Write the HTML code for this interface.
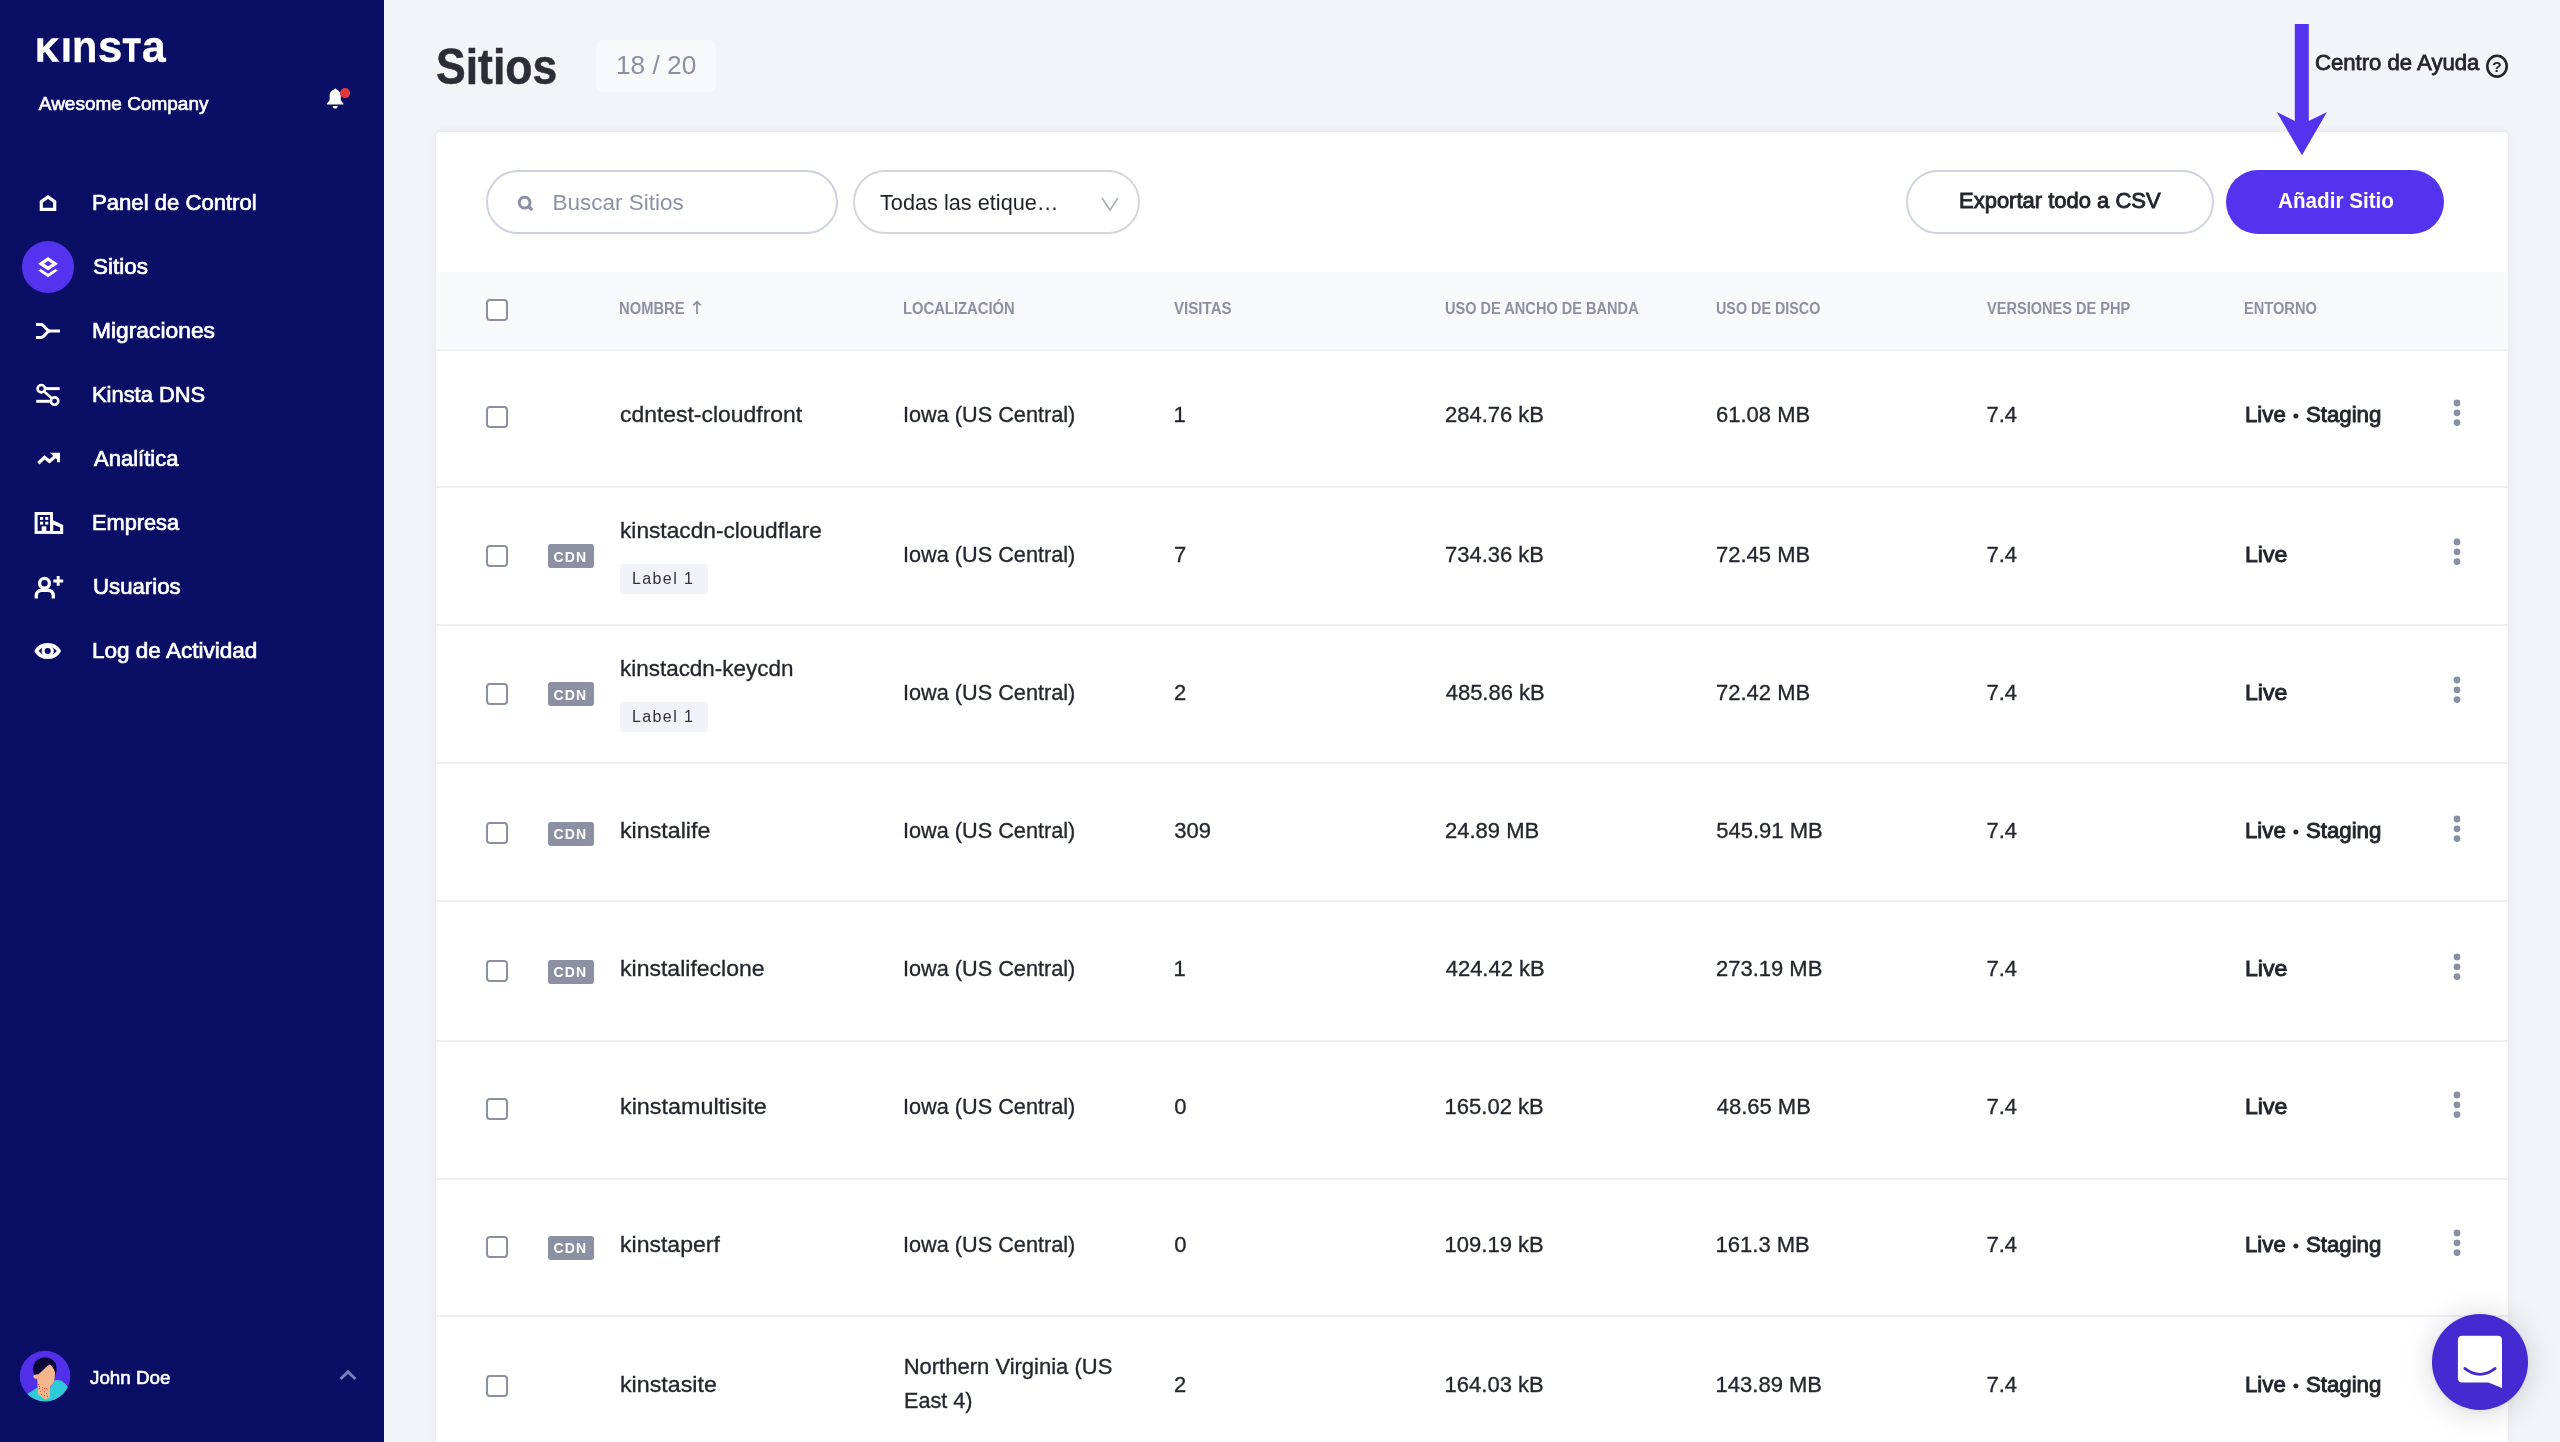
<!DOCTYPE html>
<html lang="es"><head><meta charset="utf-8"><title>Sitios - MyKinsta</title>
<style>
html,body{margin:0;padding:0}
body{width:2560px;height:1442px;overflow:hidden;position:relative;background:#f3f4f8;font-family:"Liberation Sans", sans-serif}
.t{position:absolute;white-space:nowrap}
svg{display:block;overflow:visible}
</style></head><body>
<div id="app" style="position:absolute;left:0;top:0;width:2560px;height:1442px;will-change:transform">
<div style="position:absolute;left:0;top:0;width:384px;height:1442px;background:#0a0e64"></div>
<svg style="position:absolute;left:324px;top:86px" width="28" height="26" viewBox="0 0 28 26">
<path d="M11.2 2.2 L9.6 3.8 C6.8 5 5.6 7.4 5.6 10.2 L5.6 14.2 L3 17.4 L3 18.6 L19.4 18.6 L19.4 17.4 L16.8 14.2 L16.8 10.2 C16.8 7.4 15.6 5 12.8 3.8 Z" fill="#fff"/>
<path d="M8.6 20 L13.8 20 C13.8 21.5 12.6 22.6 11.2 22.6 C9.8 22.6 8.6 21.5 8.6 20 Z" fill="#fff"/>
<circle cx="21.1" cy="7.1" r="5" fill="#df383c"/>
</svg>
<div style="position:absolute;left:22px;top:241.3px;width:52px;height:51.4px;border-radius:50%;background:#5333ed"></div>
<svg style="position:absolute;left:0;top:0" width="384" height="720" viewBox="0 0 384 720" fill="none" stroke="#fff" stroke-width="3">
<!-- home -->
<path d="M41.3 209.4 L41.3 201.6 L48 197 L54.7 201.6 L54.7 209.4 Z" stroke-width="3.2" stroke-linejoin="miter"/>
<!-- layers -->
<path d="M38.2 263.8 L48.05 257.1 L57.9 263.8 L48.05 270.5 Z M43.9 263.7 L48.05 266.3 L52.2 263.7 L48.05 261.1 Z" fill="#fff" stroke="none" fill-rule="evenodd"/>
<path d="M38.2 270.6 L40.7 268.9 L48.05 273.8 L55.4 268.9 L57.9 270.6 L48.05 277.2 Z" fill="#fff" stroke="none"/>
<!-- migrations -->
<path d="M36 324.5 L41 324.5 C45 324.5 46 331 50 331 L60 331" stroke-width="2.9"/><path d="M36 337.5 L41 337.5 C45 337.5 46 331 50 331" stroke-width="2.9"/>
<!-- dns -->
<circle cx="41.3" cy="388.7" r="3.7" stroke-width="2.6"/><circle cx="54.6" cy="401.1" r="3.7" stroke-width="2.6"/>
<path d="M43.9 391.3 L52 398.5" stroke-width="2.6"/><path d="M46 388.6 L59.7 388.6"/><path d="M36.2 401.3 L50 401.3"/>
<!-- analytics (trending up) -->
<path d="M38.3 463.3 L44.5 457.4 L49.5 461.4 L56.5 455.2" stroke-width="3.3"/><path d="M49.8 452.7 L60 452.7 L60 462.2 L57 462.2 L57 459.4 Z" fill="#fff" stroke="none"/>
<!-- building -->
<rect x="36.1" y="513.5" width="15.4" height="18.9" stroke-width="3"/>
<g fill="#fff" stroke="none"><rect x="40" y="517" width="3.1" height="2.9"/><rect x="45.2" y="517" width="3.1" height="2.9"/><rect x="40" y="521.7" width="3.1" height="2.9"/><rect x="45.2" y="521.7" width="3.1" height="2.9"/><rect x="41.7" y="526.3" width="4.6" height="6"/>
<path d="M52.5 520.1 L63.2 525 L63.2 533.9 L52.5 533.9 Z M53.3 524.5 L60.1 527.6 L60.1 531 L53.3 531 Z" fill-rule="evenodd"/></g>
<!-- users -->
<circle cx="44.5" cy="583.3" r="4.9" stroke-width="3.3"/>
<path d="M36.3 598.4 L36.3 595.6 C36.3 592.4 38.6 590.2 41.8 590.2 L47.8 590.2 C51 590.2 53.3 592.4 53.3 595.6 L53.3 598.4" stroke-width="3.4"/>
<path d="M58.2 576 L58.2 585.8 M53.3 581.1 L63.2 581.1" stroke-width="3"/>
<!-- eye -->
<path d="M36.4 651 C41 642.8 54.4 642.8 59 651 C54.4 659.2 41 659.2 36.4 651 Z" stroke-width="3.7" stroke-linejoin="round"/>
<circle cx="47.7" cy="651" r="4.6" stroke-width="3.1"/>
</svg>
<svg style="position:absolute;left:20px;top:1350px" width="51" height="53" viewBox="0 0 51 53">
<defs><clipPath id="av"><circle cx="25.1" cy="26.1" r="25.3"/></clipPath></defs>
<circle cx="25.1" cy="26.1" r="25.3" fill="#5230e9"/>
<g clip-path="url(#av)">
<path d="M4 46 L17.4 37.6 L30 38 L35 30.2 Q38 29.4 41 30.6 Q46 33.5 49 39 L52 54 L0 54 Z" fill="#2fcbd8"/>
<path d="M17.3 30 L18 44.2 L25.2 49.6 L29.8 47.4 L29.8 37.4 L34.2 31.4 L35.2 22 L32 14 L22 18 L16 25 Z" fill="#f7b78d"/>
<circle cx="15.8" cy="26.6" r="2.4" fill="#f7b78d"/>
<path d="M29.5 14 L18.3 24.6 Q16 23.6 14.6 25 Q12 20 13.6 15 Q16.5 7.6 24.4 7.2 Q33 7.2 36.2 15 Q37.4 20 35.6 25.6 Q35.4 18.6 29.5 14 Z" fill="#0b0433"/>
<g fill="#e1303c"><circle cx="18.5" cy="34.6" r=".55"/><circle cx="19.5" cy="36.6" r=".55"/><circle cx="19.5" cy="38.6" r=".55"/><circle cx="22.5" cy="37.6" r=".55"/><circle cx="24.5" cy="38.6" r=".55"/><circle cx="26.6" cy="38.6" r=".55"/><circle cx="27.5" cy="39.7" r=".55"/><circle cx="22.5" cy="39.7" r=".55"/><circle cx="20.5" cy="41.6" r=".55"/><circle cx="24.5" cy="41.6" r=".55"/><circle cx="26.5" cy="43.6" r=".55"/><circle cx="21.5" cy="44.6" r=".55"/><circle cx="24.5" cy="45.6" r=".55"/><circle cx="27.5" cy="46.6" r=".55"/></g>
</g></svg>
<svg style="position:absolute;left:338.3px;top:1368.2px" width="20" height="14" viewBox="0 0 20 14"><path d="M2.5 11 L10 3.8 L17.5 11" fill="none" stroke="#7d80b4" stroke-width="3"/></svg>
<div style="position:absolute;left:596px;top:40px;width:120px;height:52px;border-radius:7px;background:#f8f9fb"></div>
<svg style="position:absolute;left:2484px;top:53px" width="26" height="26" viewBox="0 0 26 26">
<ellipse cx="13" cy="13.2" rx="9.7" ry="10.4" fill="none" stroke="#23262f" stroke-width="2.6"/>
<text x="13" y="18.7" text-anchor="middle" font-family='"Liberation Sans", sans-serif' font-weight="700" font-size="15.5" fill="#23262f">?</text></svg>
<div style="position:absolute;left:436px;top:132px;width:2072px;height:1330px;border-radius:5px;background:#fff;box-shadow:0 0 8px rgba(30,40,90,0.075)"></div>
<div style="position:absolute;left:486.3px;top:170px;width:351.5px;height:64px;box-sizing:border-box;border:2px solid #cdd2de;border-radius:32px"></div>
<svg style="position:absolute;left:514px;top:192px" width="24" height="24" viewBox="0 0 24 24"><circle cx="10.6" cy="10.6" r="5.4" fill="none" stroke="#8a90a5" stroke-width="3"/><path d="M14.5 14.5 L18.2 18.2" stroke="#8a90a5" stroke-width="3.2"/></svg>
<div style="position:absolute;left:852.5px;top:170px;width:287px;height:64px;box-sizing:border-box;border:2px solid #d6d6da;border-radius:32px"></div>
<svg style="position:absolute;left:1099px;top:195px" width="22" height="18" viewBox="0 0 22 18"><path d="M3 3 L11 15 L19 3" fill="none" stroke="#a9aebb" stroke-width="1.6"/></svg>
<div style="position:absolute;left:1906px;top:170px;width:308px;height:64px;box-sizing:border-box;border:2px solid #d0d4e0;border-radius:32px"></div>
<div style="position:absolute;left:2226px;top:170px;width:218px;height:64px;border-radius:32px;background:#5333ed"></div>
<svg style="position:absolute;left:2270px;top:20px" width="64" height="140" viewBox="0 0 64 140">
<path d="M24.8 4 L38.8 4 L38.8 101 L57 92 L32 135.2 L6.7 92 L24.8 101 Z" fill="#5333ed"/></svg>
<div style="position:absolute;left:436px;top:272px;width:2072px;height:76px;background:#f8f9fb"></div>
<div style="position:absolute;left:436px;top:348.5px;width:2072px;height:2px;background:#eef0f6"></div>
<div style="position:absolute;left:436px;top:486px;width:2072px;height:2px;background:#eef0f6"></div>
<div style="position:absolute;left:436px;top:623.8px;width:2072px;height:2px;background:#eef0f6"></div>
<div style="position:absolute;left:436px;top:761.8px;width:2072px;height:2px;background:#eef0f6"></div>
<div style="position:absolute;left:436px;top:900.2px;width:2072px;height:2px;background:#eef0f6"></div>
<div style="position:absolute;left:436px;top:1039.5px;width:2072px;height:2px;background:#eef0f6"></div>
<div style="position:absolute;left:436px;top:1178px;width:2072px;height:2px;background:#eef0f6"></div>
<div style="position:absolute;left:436px;top:1315.4px;width:2072px;height:2px;background:#eef0f6"></div>
<div style="position:absolute;left:486px;top:299px;width:22px;height:22px;box-sizing:border-box;border:2px solid #8b90a2;border-radius:4px;background:#fff"></div>
<svg style="position:absolute;left:691px;top:300px" width="12" height="15" viewBox="0 0 12 15"><path d="M6 14 L6 2 M2.2 5.4 L6 1.6 L9.8 5.4" fill="none" stroke="#8a90a5" stroke-width="1.7"/></svg>
<div style="position:absolute;left:486px;top:406px;width:22px;height:22px;box-sizing:border-box;border:2px solid #8b90a2;border-radius:4px;background:#fff"></div>
<svg style="position:absolute;left:2451.6px;top:398.2px" width="10" height="30" viewBox="0 0 10 30" fill="#8a90a3"><circle cx="5" cy="5.0" r="3.4"/><circle cx="5" cy="14.8" r="3.4"/><circle cx="5" cy="24.6" r="3.4"/></svg>
<div style="position:absolute;left:486px;top:544.6px;width:22px;height:22px;box-sizing:border-box;border:2px solid #8b90a2;border-radius:4px;background:#fff"></div>
<div style="position:absolute;left:548px;top:544.4px;width:46px;height:24px;border-radius:3px;background:#8b90a3"></div>
<div style="position:absolute;left:620px;top:564.1px;width:88px;height:30px;border-radius:4px;background:#f1f2f8"></div>
<svg style="position:absolute;left:2451.6px;top:536.8000000000001px" width="10" height="30" viewBox="0 0 10 30" fill="#8a90a3"><circle cx="5" cy="5.0" r="3.4"/><circle cx="5" cy="14.8" r="3.4"/><circle cx="5" cy="24.6" r="3.4"/></svg>
<div style="position:absolute;left:486px;top:682.6px;width:22px;height:22px;box-sizing:border-box;border:2px solid #8b90a2;border-radius:4px;background:#fff"></div>
<div style="position:absolute;left:548px;top:682.4px;width:46px;height:24px;border-radius:3px;background:#8b90a3"></div>
<div style="position:absolute;left:620px;top:702.1px;width:88px;height:30px;border-radius:4px;background:#f1f2f8"></div>
<svg style="position:absolute;left:2451.6px;top:674.8000000000001px" width="10" height="30" viewBox="0 0 10 30" fill="#8a90a3"><circle cx="5" cy="5.0" r="3.4"/><circle cx="5" cy="14.8" r="3.4"/><circle cx="5" cy="24.6" r="3.4"/></svg>
<div style="position:absolute;left:486px;top:821.8px;width:22px;height:22px;box-sizing:border-box;border:2px solid #8b90a2;border-radius:4px;background:#fff"></div>
<div style="position:absolute;left:548px;top:821.5999999999999px;width:46px;height:24px;border-radius:3px;background:#8b90a3"></div>
<svg style="position:absolute;left:2451.6px;top:814.0px" width="10" height="30" viewBox="0 0 10 30" fill="#8a90a3"><circle cx="5" cy="5.0" r="3.4"/><circle cx="5" cy="14.8" r="3.4"/><circle cx="5" cy="24.6" r="3.4"/></svg>
<div style="position:absolute;left:486px;top:959.7px;width:22px;height:22px;box-sizing:border-box;border:2px solid #8b90a2;border-radius:4px;background:#fff"></div>
<div style="position:absolute;left:548px;top:959.5px;width:46px;height:24px;border-radius:3px;background:#8b90a3"></div>
<svg style="position:absolute;left:2451.6px;top:951.9000000000001px" width="10" height="30" viewBox="0 0 10 30" fill="#8a90a3"><circle cx="5" cy="5.0" r="3.4"/><circle cx="5" cy="14.8" r="3.4"/><circle cx="5" cy="24.6" r="3.4"/></svg>
<div style="position:absolute;left:486px;top:1098px;width:22px;height:22px;box-sizing:border-box;border:2px solid #8b90a2;border-radius:4px;background:#fff"></div>
<svg style="position:absolute;left:2451.6px;top:1090.2px" width="10" height="30" viewBox="0 0 10 30" fill="#8a90a3"><circle cx="5" cy="5.0" r="3.4"/><circle cx="5" cy="14.8" r="3.4"/><circle cx="5" cy="24.6" r="3.4"/></svg>
<div style="position:absolute;left:486px;top:1236px;width:22px;height:22px;box-sizing:border-box;border:2px solid #8b90a2;border-radius:4px;background:#fff"></div>
<div style="position:absolute;left:548px;top:1235.8px;width:46px;height:24px;border-radius:3px;background:#8b90a3"></div>
<svg style="position:absolute;left:2451.6px;top:1228.2px" width="10" height="30" viewBox="0 0 10 30" fill="#8a90a3"><circle cx="5" cy="5.0" r="3.4"/><circle cx="5" cy="14.8" r="3.4"/><circle cx="5" cy="24.6" r="3.4"/></svg>
<div style="position:absolute;left:486px;top:1375px;width:22px;height:22px;box-sizing:border-box;border:2px solid #8b90a2;border-radius:4px;background:#fff"></div>
<svg style="position:absolute;left:2451.6px;top:1367.2px" width="10" height="30" viewBox="0 0 10 30" fill="#8a90a3"><circle cx="5" cy="5.0" r="3.4"/><circle cx="5" cy="14.8" r="3.4"/><circle cx="5" cy="24.6" r="3.4"/></svg>
<div style="position:absolute;left:2432.2px;top:1314.2px;width:95.7px;height:95.7px;border-radius:50%;background:#4529d1;box-shadow:0 1px 6px 0 rgba(0,0,0,.06),0 2px 32px 0 rgba(0,0,0,.16)"></div>
<svg style="position:absolute;left:2452px;top:1330px" width="56" height="64" viewBox="0 0 56 64">
<path d="M10.4 5.8 L45.6 5.8 Q50 5.8 50 10.2 L50 57.9 L36.4 52.5 L10.4 52.5 Q5.9 52.5 5.9 48 L5.9 10.2 Q5.9 5.8 10.4 5.8 Z" fill="#fff"/>
<path d="M12.8 38.4 Q27.9 50.2 43.2 38.4" fill="none" stroke="#4529d1" stroke-width="2.7" stroke-linecap="round"/></svg>
<div id="logo0" class="t" style="left:36.47px;top:35.00px;font-size:31.8px;line-height:31.8px;color:#fff;font-weight:700;transform:scaleX(0.9727);transform-origin:0 50%;-webkit-text-stroke:1.4px #fff;">K</div>
<div id="logo1" class="t" style="left:62.30px;top:35.00px;font-size:31.8px;line-height:31.8px;color:#fff;font-weight:700;transform:scaleX(1.0063);transform-origin:0 50%;-webkit-text-stroke:1.4px #fff;">I</div>
<div id="logo2" class="t" style="left:72.20px;top:24.00px;font-size:45.2px;line-height:45.2px;color:#fff;font-weight:700;transform:scaleX(0.9204);transform-origin:0 50%;-webkit-text-stroke:0.4px #fff;">n</div>
<div id="logo3" class="t" style="left:97.73px;top:25.00px;font-size:44.6px;line-height:44.6px;color:#fff;font-weight:700;transform:scaleX(0.9813);transform-origin:0 50%;-webkit-text-stroke:0.4px #fff;">s</div>
<div id="logo4" class="t" style="left:123.10px;top:35.00px;font-size:31.8px;line-height:31.8px;color:#fff;font-weight:700;transform:scaleX(0.8928);transform-origin:0 50%;-webkit-text-stroke:1.4px #fff;">T</div>
<div id="logo5" class="t" style="left:141.93px;top:24.00px;font-size:45.2px;line-height:45.2px;color:#fff;font-weight:700;transform:scaleX(0.9426);transform-origin:0 50%;-webkit-text-stroke:0.4px #fff;">a</div>
<div id="company" class="t" style="left:38.80px;top:94.00px;font-size:19.0px;line-height:19.0px;color:#fff;font-weight:400;-webkit-text-stroke:0.6px #fff;">Awesome Company</div>
<div id="nav0" class="t" style="left:92.27px;top:192.00px;font-size:22px;line-height:22px;color:#fff;font-weight:400;transform:scaleX(1.0049);transform-origin:0 50%;-webkit-text-stroke:0.7px #fff;">Panel de Control</div>
<div id="nav1" class="t" style="left:93.30px;top:256.00px;font-size:22px;line-height:22px;color:#fff;font-weight:400;transform:scaleX(1.0206);transform-origin:0 50%;-webkit-text-stroke:0.7px #fff;">Sitios</div>
<div id="nav2" class="t" style="left:92.22px;top:320.00px;font-size:22px;line-height:22px;color:#fff;font-weight:400;transform:scaleX(1.0370);transform-origin:0 50%;-webkit-text-stroke:0.7px #fff;">Migraciones</div>
<div id="nav3" class="t" style="left:92.29px;top:384.00px;font-size:22px;line-height:22px;color:#fff;font-weight:400;transform:scaleX(0.9949);transform-origin:0 50%;-webkit-text-stroke:0.7px #fff;">Kinsta DNS</div>
<div id="nav4" class="t" style="left:94.00px;top:448.00px;font-size:22px;line-height:22px;color:#fff;font-weight:400;-webkit-text-stroke:0.7px #fff;">Analítica</div>
<div id="nav5" class="t" style="left:92.30px;top:512.00px;font-size:22px;line-height:22px;color:#fff;font-weight:400;transform:scaleX(0.9890);transform-origin:0 50%;-webkit-text-stroke:0.7px #fff;">Empresa</div>
<div id="nav6" class="t" style="left:92.61px;top:576.00px;font-size:22px;line-height:22px;color:#fff;font-weight:400;transform:scaleX(1.0089);transform-origin:0 50%;-webkit-text-stroke:0.7px #fff;">Usuarios</div>
<div id="nav7" class="t" style="left:92.24px;top:640.00px;font-size:22px;line-height:22px;color:#fff;font-weight:400;transform:scaleX(1.0237);transform-origin:0 50%;-webkit-text-stroke:0.7px #fff;">Log de Actividad</div>
<div id="john" class="t" style="left:90.11px;top:1368.00px;font-size:19.0px;line-height:19.0px;color:#fff;font-weight:400;transform:scaleX(0.9904);transform-origin:0 50%;-webkit-text-stroke:0.6px #fff;">John Doe</div>
<div id="h1" class="t" style="left:436.20px;top:42.00px;font-size:50.5px;line-height:50.5px;color:#2b2e36;font-weight:700;transform:scaleX(0.8822);transform-origin:0 50%;-webkit-text-stroke:0.5px #2b2e36;">Sitios</div>
<div id="count" class="t" style="left:616.06px;top:53.00px;font-size:25.7px;line-height:25.7px;color:#8b91a3;font-weight:400;transform:scaleX(1.0217);transform-origin:0 50%;">18 / 20</div>
<div id="help" class="t" style="left:2315.36px;top:52.00px;font-size:22.0px;line-height:22.0px;color:#23262f;font-weight:400;transform:scaleX(1.0054);transform-origin:0 50%;-webkit-text-stroke:0.8px #23262f;">Centro de Ayuda</div>
<div id="search" class="t" style="left:552.44px;top:192.00px;font-size:22.5px;line-height:22.5px;color:#8b93a7;font-weight:400;">Buscar Sitios</div>
<div id="select" class="t" style="left:879.56px;top:192.00px;font-size:22.5px;line-height:22.5px;color:#1f222b;font-weight:400;transform:scaleX(0.9646);transform-origin:0 50%;">Todas las etique…</div>
<div id="export" class="t" style="left:1958.68px;top:190.00px;font-size:22.5px;line-height:22.5px;color:#23262f;font-weight:400;transform:scaleX(0.9770);transform-origin:0 50%;-webkit-text-stroke:0.9px #23262f;">Exportar todo a CSV</div>
<div id="add" class="t" style="left:2277.68px;top:190.00px;font-size:22.5px;line-height:22.5px;color:#fff;font-weight:700;transform:scaleX(0.9180);transform-origin:0 50%;">Añadir Sitio</div>
<div id="th0" class="t" style="left:618.98px;top:301.00px;font-size:15.6px;line-height:15.6px;color:#8b91a3;font-weight:700;transform:scaleX(0.9463);transform-origin:0 50%;">NOMBRE</div>
<div id="th1" class="t" style="left:902.73px;top:301.00px;font-size:15.6px;line-height:15.6px;color:#8b91a3;font-weight:700;transform:scaleX(0.9478);transform-origin:0 50%;">LOCALIZACIÓN</div>
<div id="th2" class="t" style="left:1174.40px;top:301.00px;font-size:15.6px;line-height:15.6px;color:#8b91a3;font-weight:700;transform:scaleX(0.9694);transform-origin:0 50%;">VISITAS</div>
<div id="th3" class="t" style="left:1444.72px;top:301.00px;font-size:15.6px;line-height:15.6px;color:#8b91a3;font-weight:700;transform:scaleX(0.9339);transform-origin:0 50%;">USO DE ANCHO DE BANDA</div>
<div id="th4" class="t" style="left:1715.73px;top:301.00px;font-size:15.6px;line-height:15.6px;color:#8b91a3;font-weight:700;transform:scaleX(0.9192);transform-origin:0 50%;">USO DE DISCO</div>
<div id="th5" class="t" style="left:1987.40px;top:301.00px;font-size:15.6px;line-height:15.6px;color:#8b91a3;font-weight:700;transform:scaleX(0.9345);transform-origin:0 50%;">VERSIONES DE PHP</div>
<div id="th6" class="t" style="left:2244.49px;top:301.00px;font-size:15.6px;line-height:15.6px;color:#8b91a3;font-weight:700;transform:scaleX(0.9370);transform-origin:0 50%;">ENTORNO</div>
<div id="name0" class="t" style="left:620.28px;top:404.00px;font-size:22px;line-height:22px;color:#23262f;font-weight:400;transform:scaleX(1.0415);transform-origin:0 50%;-webkit-text-stroke:0.3px #23262f;">cdntest-cloudfront</div>
<div id="loc0" class="t" style="left:902.91px;top:404.00px;font-size:22px;line-height:22px;color:#23262f;font-weight:400;transform:scaleX(0.9856);transform-origin:0 50%;-webkit-text-stroke:0.3px #23262f;">Iowa (US Central)</div>
<div id="vis0" class="t" style="left:1173.62px;top:404.00px;font-size:22px;line-height:22px;color:#23262f;font-weight:400;-webkit-text-stroke:0.3px #23262f;">1</div>
<div id="bw0" class="t" style="left:1444.97px;top:404.00px;font-size:22px;line-height:22px;color:#23262f;font-weight:400;-webkit-text-stroke:0.3px #23262f;">284.76 kB</div>
<div id="disk0" class="t" style="left:1715.97px;top:404.00px;font-size:22px;line-height:22px;color:#23262f;font-weight:400;-webkit-text-stroke:0.3px #23262f;">61.08 MB</div>
<div id="php0" class="t" style="left:1986.47px;top:404.00px;font-size:22px;line-height:22px;color:#23262f;font-weight:400;-webkit-text-stroke:0.3px #23262f;">7.4</div>
<div id="env0" class="t" style="left:2244.86px;top:404.00px;font-size:22px;line-height:22px;color:#23262f;font-weight:400;transform:scaleX(1.0103);transform-origin:0 50%;-webkit-text-stroke:0.9px #23262f;">Live <span style="display:inline-block;width:7.7px;text-align:center;font-size:15px;position:relative;top:-1.2px">•</span> Staging</div>
<div id="cdn1" class="t" style="left:553.56px;top:550.00px;font-size:14.0px;line-height:14.0px;color:#fff;font-weight:700;letter-spacing:1.115px;">CDN</div>
<div id="name1" class="t" style="left:619.58px;top:520.00px;font-size:22px;line-height:22px;color:#23262f;font-weight:400;transform:scaleX(1.0316);transform-origin:0 50%;-webkit-text-stroke:0.3px #23262f;">kinstacdn-cloudflare</div>
<div id="lab1" class="t" style="left:631.95px;top:571.00px;font-size:16.0px;line-height:16.0px;color:#2e3140;font-weight:400;letter-spacing:1.401px;">Label 1</div>
<div id="loc1" class="t" style="left:902.91px;top:544.00px;font-size:22px;line-height:22px;color:#23262f;font-weight:400;transform:scaleX(0.9856);transform-origin:0 50%;-webkit-text-stroke:0.3px #23262f;">Iowa (US Central)</div>
<div id="vis1" class="t" style="left:1173.97px;top:544.00px;font-size:22px;line-height:22px;color:#23262f;font-weight:400;-webkit-text-stroke:0.3px #23262f;">7</div>
<div id="bw1" class="t" style="left:1444.97px;top:544.00px;font-size:22px;line-height:22px;color:#23262f;font-weight:400;-webkit-text-stroke:0.3px #23262f;">734.36 kB</div>
<div id="disk1" class="t" style="left:1715.97px;top:544.00px;font-size:22px;line-height:22px;color:#23262f;font-weight:400;-webkit-text-stroke:0.3px #23262f;">72.45 MB</div>
<div id="php1" class="t" style="left:1986.47px;top:544.00px;font-size:22px;line-height:22px;color:#23262f;font-weight:400;-webkit-text-stroke:0.3px #23262f;">7.4</div>
<div id="env1" class="t" style="left:2244.80px;top:544.00px;font-size:22px;line-height:22px;color:#23262f;font-weight:400;transform:scaleX(1.0464);transform-origin:0 50%;-webkit-text-stroke:0.9px #23262f;">Live</div>
<div id="cdn2" class="t" style="left:553.56px;top:688.00px;font-size:14.0px;line-height:14.0px;color:#fff;font-weight:700;letter-spacing:1.115px;">CDN</div>
<div id="name2" class="t" style="left:619.60px;top:658.00px;font-size:22px;line-height:22px;color:#23262f;font-weight:400;transform:scaleX(1.0205);transform-origin:0 50%;-webkit-text-stroke:0.3px #23262f;">kinstacdn-keycdn</div>
<div id="lab2" class="t" style="left:631.95px;top:709.00px;font-size:16.0px;line-height:16.0px;color:#2e3140;font-weight:400;letter-spacing:1.401px;">Label 1</div>
<div id="loc2" class="t" style="left:902.91px;top:682.00px;font-size:22px;line-height:22px;color:#23262f;font-weight:400;transform:scaleX(0.9856);transform-origin:0 50%;-webkit-text-stroke:0.3px #23262f;">Iowa (US Central)</div>
<div id="vis2" class="t" style="left:1173.97px;top:682.00px;font-size:22px;line-height:22px;color:#23262f;font-weight:400;-webkit-text-stroke:0.3px #23262f;">2</div>
<div id="bw2" class="t" style="left:1445.66px;top:682.00px;font-size:22px;line-height:22px;color:#23262f;font-weight:400;-webkit-text-stroke:0.3px #23262f;">485.86 kB</div>
<div id="disk2" class="t" style="left:1715.97px;top:682.00px;font-size:22px;line-height:22px;color:#23262f;font-weight:400;-webkit-text-stroke:0.3px #23262f;">72.42 MB</div>
<div id="php2" class="t" style="left:1986.47px;top:682.00px;font-size:22px;line-height:22px;color:#23262f;font-weight:400;-webkit-text-stroke:0.3px #23262f;">7.4</div>
<div id="env2" class="t" style="left:2244.80px;top:682.00px;font-size:22px;line-height:22px;color:#23262f;font-weight:400;transform:scaleX(1.0464);transform-origin:0 50%;-webkit-text-stroke:0.9px #23262f;">Live</div>
<div id="cdn3" class="t" style="left:553.56px;top:827.00px;font-size:14.0px;line-height:14.0px;color:#fff;font-weight:700;letter-spacing:1.115px;">CDN</div>
<div id="name3" class="t" style="left:619.55px;top:820.00px;font-size:22px;line-height:22px;color:#23262f;font-weight:400;transform:scaleX(1.0549);transform-origin:0 50%;-webkit-text-stroke:0.3px #23262f;">kinstalife</div>
<div id="loc3" class="t" style="left:902.91px;top:820.00px;font-size:22px;line-height:22px;color:#23262f;font-weight:400;transform:scaleX(0.9856);transform-origin:0 50%;-webkit-text-stroke:0.3px #23262f;">Iowa (US Central)</div>
<div id="vis3" class="t" style="left:1174.31px;top:820.00px;font-size:22px;line-height:22px;color:#23262f;font-weight:400;-webkit-text-stroke:0.3px #23262f;">309</div>
<div id="bw3" class="t" style="left:1444.97px;top:820.00px;font-size:22px;line-height:22px;color:#23262f;font-weight:400;-webkit-text-stroke:0.3px #23262f;">24.89 MB</div>
<div id="disk3" class="t" style="left:1716.31px;top:820.00px;font-size:22px;line-height:22px;color:#23262f;font-weight:400;-webkit-text-stroke:0.3px #23262f;">545.91 MB</div>
<div id="php3" class="t" style="left:1986.47px;top:820.00px;font-size:22px;line-height:22px;color:#23262f;font-weight:400;-webkit-text-stroke:0.3px #23262f;">7.4</div>
<div id="env3" class="t" style="left:2244.86px;top:820.00px;font-size:22px;line-height:22px;color:#23262f;font-weight:400;transform:scaleX(1.0103);transform-origin:0 50%;-webkit-text-stroke:0.9px #23262f;">Live <span style="display:inline-block;width:7.7px;text-align:center;font-size:15px;position:relative;top:-1.2px">•</span> Staging</div>
<div id="cdn4" class="t" style="left:553.56px;top:965.00px;font-size:14.0px;line-height:14.0px;color:#fff;font-weight:700;letter-spacing:1.115px;">CDN</div>
<div id="name4" class="t" style="left:619.56px;top:958.00px;font-size:22px;line-height:22px;color:#23262f;font-weight:400;transform:scaleX(1.0469);transform-origin:0 50%;-webkit-text-stroke:0.3px #23262f;">kinstalifeclone</div>
<div id="loc4" class="t" style="left:902.91px;top:958.00px;font-size:22px;line-height:22px;color:#23262f;font-weight:400;transform:scaleX(0.9856);transform-origin:0 50%;-webkit-text-stroke:0.3px #23262f;">Iowa (US Central)</div>
<div id="vis4" class="t" style="left:1173.62px;top:958.00px;font-size:22px;line-height:22px;color:#23262f;font-weight:400;-webkit-text-stroke:0.3px #23262f;">1</div>
<div id="bw4" class="t" style="left:1445.66px;top:958.00px;font-size:22px;line-height:22px;color:#23262f;font-weight:400;-webkit-text-stroke:0.3px #23262f;">424.42 kB</div>
<div id="disk4" class="t" style="left:1715.97px;top:958.00px;font-size:22px;line-height:22px;color:#23262f;font-weight:400;-webkit-text-stroke:0.3px #23262f;">273.19 MB</div>
<div id="php4" class="t" style="left:1986.47px;top:958.00px;font-size:22px;line-height:22px;color:#23262f;font-weight:400;-webkit-text-stroke:0.3px #23262f;">7.4</div>
<div id="env4" class="t" style="left:2244.80px;top:958.00px;font-size:22px;line-height:22px;color:#23262f;font-weight:400;transform:scaleX(1.0464);transform-origin:0 50%;-webkit-text-stroke:0.9px #23262f;">Live</div>
<div id="name5" class="t" style="left:619.54px;top:1096.00px;font-size:22px;line-height:22px;color:#23262f;font-weight:400;transform:scaleX(1.0612);transform-origin:0 50%;-webkit-text-stroke:0.3px #23262f;">kinstamultisite</div>
<div id="loc5" class="t" style="left:902.91px;top:1096.00px;font-size:22px;line-height:22px;color:#23262f;font-weight:400;transform:scaleX(0.9856);transform-origin:0 50%;-webkit-text-stroke:0.3px #23262f;">Iowa (US Central)</div>
<div id="vis5" class="t" style="left:1174.31px;top:1096.00px;font-size:22px;line-height:22px;color:#23262f;font-weight:400;-webkit-text-stroke:0.3px #23262f;">0</div>
<div id="bw5" class="t" style="left:1444.62px;top:1096.00px;font-size:22px;line-height:22px;color:#23262f;font-weight:400;-webkit-text-stroke:0.3px #23262f;">165.02 kB</div>
<div id="disk5" class="t" style="left:1716.66px;top:1096.00px;font-size:22px;line-height:22px;color:#23262f;font-weight:400;-webkit-text-stroke:0.3px #23262f;">48.65 MB</div>
<div id="php5" class="t" style="left:1986.47px;top:1096.00px;font-size:22px;line-height:22px;color:#23262f;font-weight:400;-webkit-text-stroke:0.3px #23262f;">7.4</div>
<div id="env5" class="t" style="left:2244.80px;top:1096.00px;font-size:22px;line-height:22px;color:#23262f;font-weight:400;transform:scaleX(1.0464);transform-origin:0 50%;-webkit-text-stroke:0.9px #23262f;">Live</div>
<div id="cdn6" class="t" style="left:553.56px;top:1241.00px;font-size:14.0px;line-height:14.0px;color:#fff;font-weight:700;letter-spacing:1.115px;">CDN</div>
<div id="name6" class="t" style="left:619.56px;top:1234.00px;font-size:22px;line-height:22px;color:#23262f;font-weight:400;transform:scaleX(1.0470);transform-origin:0 50%;-webkit-text-stroke:0.3px #23262f;">kinstaperf</div>
<div id="loc6" class="t" style="left:902.91px;top:1234.00px;font-size:22px;line-height:22px;color:#23262f;font-weight:400;transform:scaleX(0.9856);transform-origin:0 50%;-webkit-text-stroke:0.3px #23262f;">Iowa (US Central)</div>
<div id="vis6" class="t" style="left:1174.31px;top:1234.00px;font-size:22px;line-height:22px;color:#23262f;font-weight:400;-webkit-text-stroke:0.3px #23262f;">0</div>
<div id="bw6" class="t" style="left:1444.62px;top:1234.00px;font-size:22px;line-height:22px;color:#23262f;font-weight:400;-webkit-text-stroke:0.3px #23262f;">109.19 kB</div>
<div id="disk6" class="t" style="left:1715.62px;top:1234.00px;font-size:22px;line-height:22px;color:#23262f;font-weight:400;-webkit-text-stroke:0.3px #23262f;">161.3 MB</div>
<div id="php6" class="t" style="left:1986.47px;top:1234.00px;font-size:22px;line-height:22px;color:#23262f;font-weight:400;-webkit-text-stroke:0.3px #23262f;">7.4</div>
<div id="env6" class="t" style="left:2244.86px;top:1234.00px;font-size:22px;line-height:22px;color:#23262f;font-weight:400;transform:scaleX(1.0103);transform-origin:0 50%;-webkit-text-stroke:0.9px #23262f;">Live <span style="display:inline-block;width:7.7px;text-align:center;font-size:15px;position:relative;top:-1.2px">•</span> Staging</div>
<div id="name7" class="t" style="left:619.55px;top:1374.00px;font-size:22px;line-height:22px;color:#23262f;font-weight:400;transform:scaleX(1.0566);transform-origin:0 50%;-webkit-text-stroke:0.3px #23262f;">kinstasite</div>
<div id="loc7a" class="t" style="left:903.68px;top:1356.00px;font-size:22px;line-height:22px;color:#23262f;font-weight:400;-webkit-text-stroke:0.3px #23262f;">Northern Virginia (US</div>
<div id="loc7b" class="t" style="left:903.61px;top:1390.00px;font-size:22px;line-height:22px;color:#23262f;font-weight:400;transform:scaleX(0.9830);transform-origin:0 50%;-webkit-text-stroke:0.3px #23262f;">East 4)</div>
<div id="vis7" class="t" style="left:1173.97px;top:1374.00px;font-size:22px;line-height:22px;color:#23262f;font-weight:400;-webkit-text-stroke:0.3px #23262f;">2</div>
<div id="bw7" class="t" style="left:1444.62px;top:1374.00px;font-size:22px;line-height:22px;color:#23262f;font-weight:400;-webkit-text-stroke:0.3px #23262f;">164.03 kB</div>
<div id="disk7" class="t" style="left:1715.62px;top:1374.00px;font-size:22px;line-height:22px;color:#23262f;font-weight:400;-webkit-text-stroke:0.3px #23262f;">143.89 MB</div>
<div id="php7" class="t" style="left:1986.47px;top:1374.00px;font-size:22px;line-height:22px;color:#23262f;font-weight:400;-webkit-text-stroke:0.3px #23262f;">7.4</div>
<div id="env7" class="t" style="left:2244.86px;top:1374.00px;font-size:22px;line-height:22px;color:#23262f;font-weight:400;transform:scaleX(1.0103);transform-origin:0 50%;-webkit-text-stroke:0.9px #23262f;">Live <span style="display:inline-block;width:7.7px;text-align:center;font-size:15px;position:relative;top:-1.2px">•</span> Staging</div>
</div>
</body></html>
